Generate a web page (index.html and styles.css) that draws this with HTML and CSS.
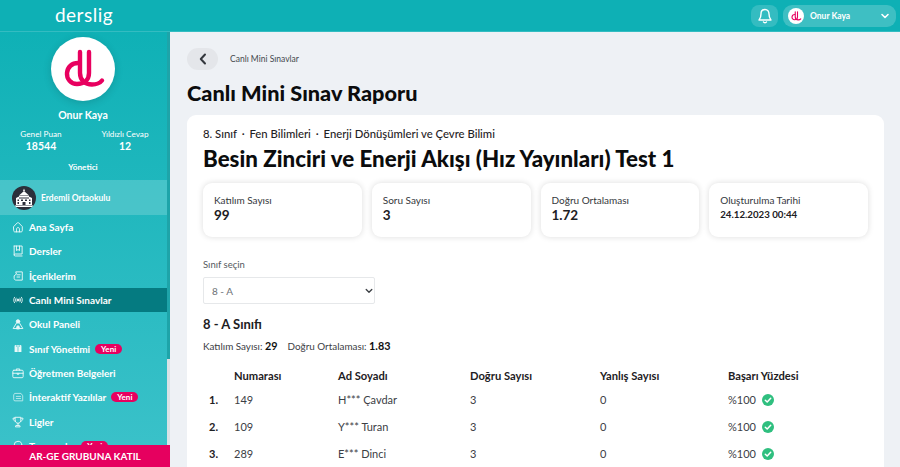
FILE: index.html
```html
<!DOCTYPE html>
<html lang="tr">
<head>
<meta charset="utf-8">
<title>Canlı Mini Sınav Raporu</title>
<link rel="stylesheet" href="styles.css">
</head>
<body>
<svg class="defs" width="0" height="0">
  <symbol id="dl" viewBox="0 0 64 64">
    <path d="M29 15V36C29 43 34 47.500 41 47.500C45 47.500 49 46 51 43.500" fill="none" stroke="#e8005f" stroke-width="4.400" stroke-linecap="round"/>
    <path d="M38 15V36C38 43 33 47 26 47C20 47 15.500 42 16 36C16.500 30 21 26 27 26" fill="none" stroke="#e8005f" stroke-width="4.400" stroke-linecap="round"/>
  </symbol>
</svg>
<header class="topbar">
  <div class="brand"><span class="brand-name">derslig</span></div>
  <div class="top-actions">
    <div class="bell">
      <svg width="16" height="16" viewBox="0 0 16 16" fill="none" stroke="#fff" stroke-width="1.400" stroke-linecap="round" stroke-linejoin="round"><path d="M8 1.500C5.500 1.500 4 3.500 4 6C4 9.500 2.500 11 2 12H14C13.500 11 12 9.500 12 6C12 3.500 10.500 1.500 8 1.500Z"/><path d="M6.500 14C7 15 9 15 9.500 14"/></svg>
    </div>
    <div class="user-pill">
      <span class="user-avatar"><svg width="16" height="16"><use href="#dl"/></svg></span>
      <span class="user-name">Onur Kaya</span>
      <svg class="user-chevron" width="10" height="10" viewBox="0 0 10 10" fill="none" stroke="#fff" stroke-width="1.600" stroke-linecap="round" stroke-linejoin="round"><path d="M2 3.500L5 6.500L8 3.500"/></svg>
    </div>
  </div>
</header>
<div class="shell">
  <aside class="sidebar">
    <div class="profile">
      <div class="avatar"><svg width="64" height="64"><use href="#dl"/></svg></div>
      <div class="profile-name">Onur Kaya</div>
      <div class="profile-stats">
        <div class="pstat"><span class="pstat-label">Genel Puan</span><strong>18544</strong></div>
        <div class="pstat"><span class="pstat-label">Yıldızlı Cevap</span><strong>12</strong></div>
      </div>
      <div class="role">Yönetici</div>
    </div>
    <div class="school">
      <span class="school-logo">
        <svg width="24" height="24" viewBox="0 0 24 24" fill="#fff"><path d="M12 2.500L13 5L11 5ZM12 5L16.500 9H7.500ZM7 9.500H17V11.500H7ZM4 12L7 10.500V12.500H17V10.500L20 12V19H4ZM3 19.500H21V21H3Z"/><path d="M10.500 16H13.500V19H10.500ZM5.500 13.500H7V15H5.500ZM17 13.500H18.500V15H17ZM5.500 16H7V18H5.500ZM17 16H18.500V18H17ZM9 13.500H11V15H9ZM13 13.500H15V15H13Z" fill="#2b2f3a"/></svg>
      </span>
      <span>Erdemli Ortaokulu</span>
    </div>
    <nav class="nav">
      <a class="nav-item"><svg class="ico" viewBox="0 0 14 14"><path d="M2 6.500L6 2.300C6.600 1.700 7.400 1.700 8 2.300L12 6.500V11.500C12 12.200 11.500 12.700 10.800 12.700H3.200C2.500 12.700 2 12.200 2 11.500Z"/><path d="M5.300 12.700V9.500C5.300 7 8.700 7 8.700 9.500V12.700"/></svg><span>Ana Sayfa</span></a>
      <a class="nav-item"><svg class="ico" viewBox="0 0 14 14"><path d="M2.500 1.200H11.800V10.500H3.800C2.900 10.500 2.500 11 2.500 11.600C2.500 12.300 2.900 12.800 3.800 12.800H11.800"/><path d="M2.500 1.200V11.600"/><path d="M5.200 1.200V6.500L7 5.300L8.800 6.500V1.200"/></svg><span>Dersler</span></a>
      <a class="nav-item"><svg class="ico" viewBox="0 0 14 14"><path d="M4.800 2.200H12V11.800H4.800C3.500 11.800 2.500 11 2.500 9.800V6.800L4.800 5Z"/><path d="M5.800 5.600H9.600M5.800 8.200H9"/></svg><span>İçeriklerim</span></a>
      <a class="nav-item active"><svg class="ico" viewBox="0 0 14 14"><circle class="fill" cx="7" cy="7" r="1.200"/><path d="M4.800 4.800C3.900 6 3.900 8 4.800 9.200M9.200 4.800C10.100 6 10.100 8 9.200 9.200M2.900 3.800C1.700 5.600 1.700 8.400 2.900 10.200M11.100 3.800C12.300 5.600 12.300 8.400 11.100 10.200"/></svg><span>Canlı Mini Sınavlar</span></a>
      <a class="nav-item"><svg class="ico" viewBox="0 0 14 14"><path d="M5.500 5.500L1.300 12.300H12.700L8.500 5.500"/><circle class="fill" cx="7" cy="4" r="2"/><path class="fill" d="M5.300 12.300C5.300 10.300 6 9 7 9C8 9 8.700 10.300 8.700 12.300Z"/></svg><span>Okul Paneli</span></a>
      <a class="nav-item"><svg class="ico" viewBox="0 0 14 14"><path class="fill solid" d="M3 3.500C3 2.500 4 2.200 4.500 2.200H9.500C10.200 2.200 11 2.600 11 3.500V10.500H3ZM6.600 2.500V10.300H7.400V2.500ZM4.600 2.500V4.500H5.400V2.500ZM8.600 2.500V4.500H9.400V2.500Z" fill-rule="evenodd"/></svg><span>Sınıf Yönetimi</span><em class="badge">Yeni</em></a>
      <a class="nav-item"><svg class="ico" viewBox="0 0 14 14"><rect x="1" y="3.800" width="12" height="8.700" rx="1.200"/><path d="M5 3.800V2.300H9V3.800M1 7.300H13M6 7.300V8.500H8V7.300"/></svg><span>Öğretmen Belgeleri</span></a>
      <a class="nav-item"><svg class="ico dim" viewBox="0 0 14 14"><path d="M3.500 2.800H10.500L12.500 5.500V11.500H3.500C2.500 11.500 2 11 2 10V5Z"/><path d="M5 6.300H10M5 8.800H10"/></svg><span>İnteraktif Yazılılar</span><em class="badge">Yeni</em></a>
      <a class="nav-item"><svg class="ico" viewBox="0 0 14 14"><path d="M3.700 1.500H10.300V5C10.300 7 8.900 8.500 7 8.500C5.100 8.500 3.700 7 3.700 5Z"/><path d="M3.700 2.500H1.200C1.200 4.500 2.300 5.800 4 6.300M10.300 2.500H12.800C12.800 4.500 11.700 5.800 10 6.300M7 8.500V11M4.500 12.700H9.500L9 11H5Z"/></svg><span>Ligler</span></a>
      <a class="nav-item"><svg class="ico" viewBox="0 0 14 14"><circle cx="7" cy="6" r="4.500"/></svg><span>Turnuvalar</span><em class="badge">Yeni</em></a>
    </nav>
    <div class="scroll-thumb"></div>
    <a class="cta">AR-GE GRUBUNA KATIL</a>
  </aside>
  <main class="main">
    <div class="crumbs">
      <button class="back" type="button" aria-label="Geri"><svg width="10" height="12" viewBox="0 0 10 12" fill="none" stroke="#33373d" stroke-width="2" stroke-linecap="round" stroke-linejoin="round"><path d="M7 1.500L2.800 6L7 10.500"/></svg></button>
      <span class="crumb">Canlı Mini Sınavlar</span>
    </div>
    <h1 class="page-title">Canlı Mini Sınav Raporu</h1>
    <section class="card">
      <div class="path">8. Sınıf <i>·</i> Fen Bilimleri <i>·</i> Enerji Dönüşümleri ve Çevre Bilimi</div>
      <h2 class="test-title">Besin Zinciri ve Enerji Akışı (Hız Yayınları) Test 1</h2>
      <div class="stats">
        <div class="stat"><span>Katılım Sayısı</span><strong>99</strong></div>
        <div class="stat"><span>Soru Sayısı</span><strong>3</strong></div>
        <div class="stat"><span>Doğru Ortalaması</span><strong>1.72</strong></div>
        <div class="stat"><span>Oluşturulma Tarihi</span><strong class="small">24.12.2023 00:44</strong></div>
      </div>
      <label class="sel-label" for="sinif">Sınıf seçin</label>
      <div class="sel-wrap">
        <select class="sel" id="sinif"><option>8 - A</option></select>
        <svg class="sel-arrow" width="8" height="6" viewBox="0 0 8 6" fill="none" stroke="#3a3e43" stroke-width="1.300" stroke-linecap="round" stroke-linejoin="round"><path d="M1.200 1.500L4 4.300L6.800 1.500"/></svg>
      </div>
      <h3 class="class-title">8 - A Sınıfı</h3>
      <p class="meta">Katılım Sayısı: <b>29</b><span class="meta-gap"></span>Doğru Ortalaması: <b>1.83</b></p>
      <table class="report">
        <colgroup><col class="c0"><col class="c1"><col class="c2"><col class="c3"><col class="c4"><col class="c5"></colgroup>
        <thead><tr><th></th><th>Numarası</th><th>Ad Soyadı</th><th>Doğru Sayısı</th><th>Yanlış Sayısı</th><th>Başarı Yüzdesi</th></tr></thead>
        <tbody>
          <tr><td class="rank">1.</td><td>149</td><td>H*** Çavdar</td><td>3</td><td>0</td><td>%100 <svg class="ok" viewBox="0 0 12 12"><circle cx="6" cy="6" r="6" fill="#2fbf7f"/><path d="M3.300 6.200L5.200 8L8.700 4.300" fill="none" stroke="#fff" stroke-width="1.500" stroke-linecap="round" stroke-linejoin="round"/></svg></td></tr>
          <tr><td class="rank">2.</td><td>109</td><td>Y*** Turan</td><td>3</td><td>0</td><td>%100 <svg class="ok" viewBox="0 0 12 12"><circle cx="6" cy="6" r="6" fill="#2fbf7f"/><path d="M3.300 6.200L5.200 8L8.700 4.300" fill="none" stroke="#fff" stroke-width="1.500" stroke-linecap="round" stroke-linejoin="round"/></svg></td></tr>
          <tr><td class="rank">3.</td><td>289</td><td>E*** Dinci</td><td>3</td><td>0</td><td>%100 <svg class="ok" viewBox="0 0 12 12"><circle cx="6" cy="6" r="6" fill="#2fbf7f"/><path d="M3.300 6.200L5.200 8L8.700 4.300" fill="none" stroke="#fff" stroke-width="1.500" stroke-linecap="round" stroke-linejoin="round"/></svg></td></tr>
        </tbody>
      </table>
    </section>
  </main>
</div>
</body>
</html>
```
FILE: styles.css
```css
* { box-sizing: border-box; }
html, body { height: 100%; }
body {
  margin: 0;
  overflow: hidden;
  font-family: Lato, "Noto Sans", sans-serif;
  color: #1d2023;
  background: #eef1f5;
  display: flex;
  flex-direction: column;
}
.defs { display: none; }

.topbar {
  flex: 0 0 32px;
  background: #0eb0b5;
  display: flex;
  align-items: center;
  justify-content: space-between;
  border-bottom: 1px solid #34bcc1;
}
.brand { width: 170px; text-align: center; line-height: 28px; }
.brand-name { color: #fff; font-size: 19px; font-weight: 400; letter-spacing: .5px; margin-left: -2px; }
.top-actions { display: flex; align-items: center; gap: 5px; padding-right: 4px; }
.bell {
  width: 27px; height: 22px; border-radius: 8px;
  background: rgba(255,255,255,.16);
  display: flex; align-items: center; justify-content: center;
}
.user-pill {
  width: 113px; height: 22px; border-radius: 9px;
  background: rgba(255,255,255,.2);
  display: flex; align-items: center; padding: 0 6px 0 5px;
  color: #fff;
}
.user-avatar {
  width: 16px; height: 16px; border-radius: 50%; background: #fff;
  display: flex;
}
.user-name { font-size: 8.500px; font-weight: 700; margin-left: 6px; flex: 1; }

.shell { flex: 1; display: flex; min-height: 0; }

.sidebar {
  position: relative;
  flex: 0 0 170px;
  background: linear-gradient(180deg, #0fb1b6 0%, #3cc2ca 100%);
  color: #fff;
  display: flex;
  flex-direction: column;
  overflow: hidden;
}
.profile { padding: 5px 4px 0 0; display: flex; flex-direction: column; align-items: center; }
.avatar {
  width: 64px; height: 64px; border-radius: 50%; background: #fff;
  box-shadow: 0 2px 8px rgba(0,0,0,.14);
}
.profile-name { font-size: 10.500px; font-weight: 700; margin-top: 8px; }
.profile-stats { display: grid; grid-template-columns: 82px 86px; width: 100%; margin-top: 8px; }
.pstat { display: flex; flex-direction: column; align-items: center; }
.pstat-label { font-size: 8.200px; line-height: 10px; white-space: nowrap; }
.pstat strong { font-size: 10.500px; line-height: 12px; margin-top: 1px; }
.role { font-size: 8.200px; font-weight: 700; margin-top: 10px; margin-bottom: 8px; }

.school {
  height: 35px; padding: 0 12px;
  background: rgba(255,255,255,.18);
  display: flex; align-items: center; gap: 5px;
  font-size: 8.500px; font-weight: 700;
  margin-right: 3px;
  flex: none;
}
.school-logo {
  width: 24px; height: 24px; border-radius: 50%; background: #2b2f3a;
  display: flex; overflow: hidden;
}

.nav { display: flex; flex-direction: column; margin-right: 3px; }
.nav-item {
  height: 24.300px; padding-left: 12px;
  display: flex; align-items: center;
  font-size: 10px; font-weight: 700; color: #fff;
  white-space: nowrap;
  flex: none;
}
.nav-item.active { background: #057b81; }
.ico {
  width: 12px; height: 12px; margin-right: 5px; flex: none;
  fill: none; stroke: #fff; stroke-width: 1.100; stroke-linejoin: round; stroke-linecap: round;
  opacity: .9;
}
.ico.dim { opacity: .65; }
.ico .fill { fill: #fff; }
.ico .solid { stroke: none; }
.badge {
  font-style: normal; font-size: 8px; font-weight: 700;
  background: #e8005f; color: #fff;
  height: 10px; line-height: 10px; padding: 0 6px; border-radius: 6px;
  margin-left: 5px;
}
.scroll-thumb {
  position: absolute; right: 0; top: 327px; bottom: 0; width: 3px;
  background: #d9e2e6;
}
.sidebar::after {
  content: ""; position: absolute; right: 0; top: 0; width: 3px; height: 327px;
  background: #1ea4a9;
}
.cta {
  position: absolute; left: 0; right: 0; bottom: 0; height: 22px; z-index: 1;
  background: #e6005f; color: #fff;
  font-size: 10px; font-weight: 700;
  display: flex; align-items: center; justify-content: center;
}

.main { flex: 1; min-width: 0; padding: 16px 16px 0 17px; overflow: hidden; }
.crumbs { display: flex; align-items: center; gap: 12px; }
.back {
  width: 31px; height: 22px; border: 0; padding: 0; border-radius: 11px;
  background: #e4e6ea;
  display: flex; align-items: center; justify-content: center;
}
.crumb { font-size: 8.500px; color: #44484d; }
.page-title { margin: 10px 0 9px; font-size: 21.700px; line-height: 26px; font-weight: 900; color: #0b0c0d; }
.card { background: #fff; border-radius: 9px; padding: 12px 16px 0; height: 400px; }
.path { font-size: 11.300px; font-weight: 500; line-height: 14px; color: #1f2225; }
.path i { font-style: normal; margin: 0 2px; }
.test-title { margin: 5px 0 11px; font-size: 22.300px; line-height: 26px; font-weight: 900; color: #0b0c0d; }
.stats { display: grid; grid-template-columns: repeat(4, 1fr); gap: 10px; }
.stat {
  height: 54px; background: #fff; border-radius: 9px;
  box-shadow: 0 0 6px rgba(0,0,0,.14);
  padding: 11px 11px 0;
  display: flex; flex-direction: column;
}
.stat span { font-size: 10px; line-height: 12px; color: #34383c; }
.stat strong { font-size: 13.500px; line-height: 17px; font-weight: 700; margin-top: 1px; }
.stat strong.small { font-size: 9.700px; line-height: 14px; }
.sel-label { display: block; margin-top: 22px; font-size: 9.500px; line-height: 12px; color: #55595e; }
.sel-wrap { position: relative; width: 172px; margin-top: 6px; }
.sel {
  display: block; width: 100%; height: 27px; padding: 0 8px;
  appearance: none; -webkit-appearance: none;
  border: 1px solid #e6e8ea; border-radius: 2px; background: #fff;
  font: 10px Lato, sans-serif; color: #6c7075;
}
.sel-arrow { position: absolute; right: 2px; top: 11px; }
.class-title { margin: 12px 0 0; font-size: 13px; line-height: 16px; font-weight: 700; }
.meta { margin: 7px 0 0; font-size: 9.900px; line-height: 14px; color: #3c4045; }
.meta b { font-size: 10.800px; color: #111; }
.meta-gap { display: inline-block; width: 10px; }
.report { margin-top: 11.500px; border-collapse: collapse; table-layout: fixed; width: 665px; }
.c0 { width: 31px; } .c1 { width: 104px; } .c2 { width: 132px; } .c3 { width: 130px; } .c4 { width: 128px; } .c5 { width: 140px; }
.report th { text-align: left; font-size: 11.200px; font-weight: 700; height: 21px; color: #1d2023; padding: 0; }
.report td { height: 27px; font-size: 11px; color: #3c4045; padding: 0; }
.report td.rank { font-weight: 700; color: #1d2023; padding-left: 6px; }
.ok { width: 12px; height: 12px; vertical-align: -2px; margin-left: 3px; }
```
